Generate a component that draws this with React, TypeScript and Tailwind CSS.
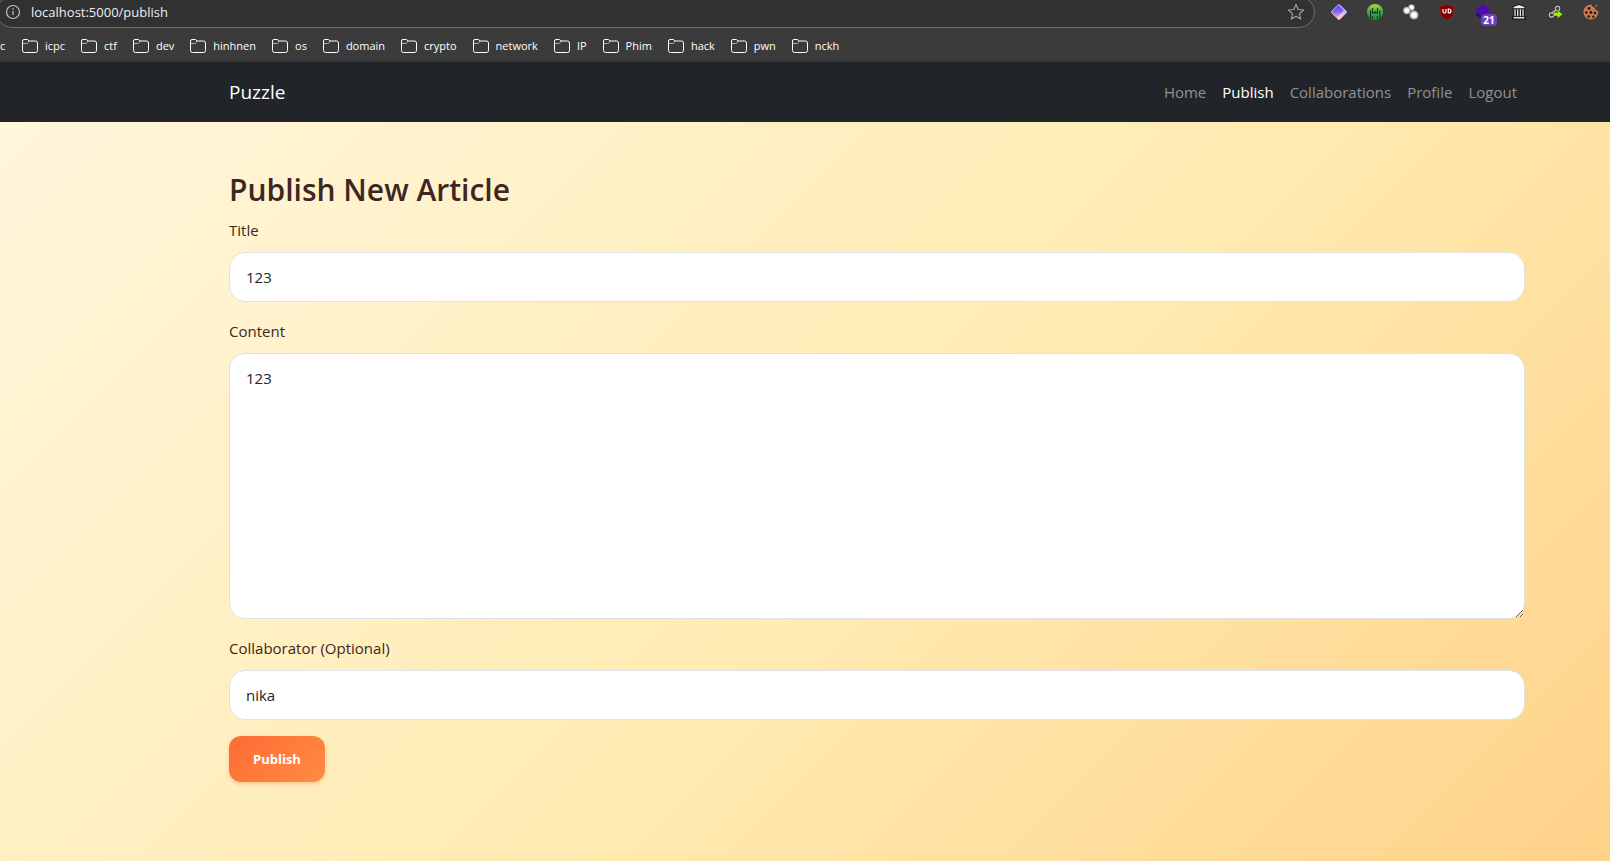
import type { ReactNode } from 'react';

const bookmarks = ['icpc', 'ctf', 'dev', 'hinhnen', 'os', 'domain', 'crypto', 'network', 'IP', 'Phim', 'hack', 'pwn', 'nckh'];

const navItems = [
  { label: 'Home', active: false },
  { label: 'Publish', active: true },
  { label: 'Collaborations', active: false },
  { label: 'Profile', active: false },
  { label: 'Logout', active: false },
];

function Folder() {
  return (
    <svg width="16" height="14" viewBox="0 0 16 14" fill="none" strokeWidth="1">
      <path d="M.5 4.500h4c1.200 0 2-.800 2.300-2.500" stroke="#b5b5b5" />
      <path d="M2 .5h3c.6 0 1 .2 1.300.600l.7.900h6.500a2 2 0 0 1 2 2v7.500a2 2 0 0 1-2 2H2.500a2 2 0 0 1-2-2V2A1.500 1.500 0 0 1 2 .5z" stroke="#fff" />
    </svg>
  );
}

function Info() {
  return (
    <svg width="16" height="16" viewBox="0 0 16 16" fill="none" stroke="#c4c4c4">
      <circle cx="8" cy="8" r="6.500" strokeWidth="1.200" />
      <path d="M8 7v4" strokeWidth="1.200" />
      <circle cx="8" cy="5" r=".8" fill="#c4c4c4" stroke="none" />
    </svg>
  );
}

function Star() {
  return (
    <svg width="18" height="18" viewBox="0 0 18 18" fill="none" stroke="#a6a6a6" strokeWidth="1.100" strokeLinejoin="round">
      <path d="M9 1.500l2.200 5 5.400.500-4.100 3.600 1.200 5.400L9 13.200 4.300 16l1.200-5.400L1.400 7l5.400-.500z" />
    </svg>
  );
}

function Ext({ label, children }: { label: string; children: ReactNode }) {
  return (
    <button type="button" aria-label={label} className="relative flex h-6 w-5 items-center justify-center">
      {children}
    </button>
  );
}

function Extensions() {
  return (
    <div className="flex shrink-0 items-center gap-4">
      <Ext label="Diamond">
        <svg width="16" height="16" viewBox="0 0 16 16">
          <defs>
            <linearGradient id="dia" x1="0" y1="0" x2="0" y2="1">
              <stop offset="0" stopColor="#a58bff" />
              <stop offset=".5" stopColor="#c9b8f5" />
              <stop offset="1" stopColor="#ffd0b8" />
            </linearGradient>
            <linearGradient id="diaInner" x1="0" y1="0" x2="0" y2="1">
              <stop offset="0" stopColor="#5f4bff" />
              <stop offset=".5" stopColor="#7f5cf5" />
              <stop offset="1" stopColor="#f0a8b4" />
            </linearGradient>
          </defs>
          <path d="M7 .500q1-.800 2 0l6.500 6.500q.800 1 0 2L9 15.500q-1 .800-2 0L.5 9q-.800-1 0-2z" fill="url(#dia)" />
          <path d="M7.500 1.200L12.800 6.500 6 13.200 1.200 8.500q-.500-.500 0-1z" fill="url(#diaInner)" />
        </svg>
      </Ext>
      <Ext label="Green bars">
        <svg width="16" height="16" viewBox="0 0 16 16">
          <defs>
            <linearGradient id="grn" x1="0" y1="0" x2="0" y2="1">
              <stop offset="0" stopColor="#b5d334" />
              <stop offset=".5" stopColor="#3fae49" />
              <stop offset="1" stopColor="#12883c" />
            </linearGradient>
          </defs>
          <circle cx="8" cy="8" r="8" fill="url(#grn)" />
          <path d="M3.500 6v8M5.500 4v6M5.500 12v3M8 7v3M10.500 4v6M10.500 12v3M12.800 6v8M5.500 8.500h5" stroke="#1c3b24" strokeWidth="1.100" fill="none" />
        </svg>
      </Ext>
      <Ext label="Dots">
        <svg width="18" height="18" viewBox="0 0 18 18">
          <defs>
            <radialGradient id="dot">
              <stop offset=".45" stopColor="#fff" />
              <stop offset="1" stopColor="#8d8d8d" />
            </radialGradient>
          </defs>
          <circle cx="9.500" cy="4.500" r="3.300" fill="url(#dot)" />
          <circle cx="4.800" cy="7.500" r="3.800" fill="url(#dot)" />
          <circle cx="12" cy="12" r="4.600" fill="url(#dot)" />
        </svg>
      </Ext>
      <Ext label="Shield">
        <svg width="16" height="16" viewBox="0 0 16 16">
          <path d="M8 0c2 1.400 4 1.800 6.800 1.800V8c0 4-3 6.500-6.800 8-3.800-1.500-6.800-4-6.800-8V1.800C4 1.800 6 1.400 8 0z" fill="#800000" stroke="#a33" strokeWidth=".5" />
          <path d="M4 5v2.500a1.500 1.500 0 0 0 3 0V5M9.300 5v4h.7a2 2 0 0 0 0-4z" fill="none" stroke="#fff" strokeWidth="1.200" />
        </svg>
      </Ext>
      <Ext label="Layers">
        <svg width="16" height="16" viewBox="0 0 16 16">
          <path d="M8 0l8 6-8 6-8-6z" fill="#4a0bb0" />
          <path d="M1 8l7 5v2.500L1 11z" fill="#23078a" />
        </svg>
        <span className="absolute top-[14px] left-2 flex h-3 w-4 items-center justify-center rounded bg-[#6b3fc0] text-[10px] font-bold text-white">21</span>
      </Ext>
      <Ext label="Archive">
        <svg width="14" height="16" viewBox="0 0 14 16">
          <path d="M7 0l6.500 2.500V5h-.8v7l1.300 1v2.500H0V13l1.300-1V5H.5V2.500z" fill="#111" />
          <path d="M7 1l5.500 2v1.200h-11V3z" fill="#eee" />
          <path d="M3 5.200v7M5.700 5.200v7M8.400 5.200v7M11 5.200v7" stroke="#e4e4e4" strokeWidth="1.300" />
          <path d="M1.500 13.800h11" stroke="#eee" strokeWidth="1.400" />
        </svg>
      </Ext>
      <Ext label="Redirect">
        <svg width="16" height="16" viewBox="0 0 16 16" fill="none">
          <g stroke="#1e1e1e" strokeWidth="3">
            <circle cx="10.500" cy="4.500" r="2.200" />
            <circle cx="4.500" cy="11" r="2.200" />
          </g>
          <g stroke="#b4bab5" strokeWidth="1.500">
            <circle cx="10.500" cy="4.500" r="2.200" />
            <circle cx="4.500" cy="11" r="2.200" />
            <path d="M9 6L6 9.500M5.500 7.500h3" />
          </g>
          <path d="M6.500 8.500h4V6l5 4.300-5 4.200V12h-4z" fill="#a2ee14" stroke="#3d6b0c" strokeWidth=".5" />
        </svg>
      </Ext>
      <Ext label="Cookies">
        <svg width="16" height="16" viewBox="0 0 16 16">
          <path d="M8.500.5a3 3 0 0 0 3.500 3 3 3 0 0 0 3.300 3.500A7.500 7.500 0 1 1 8.500.5z" fill="#c67a52" />
          <circle cx="13.500" cy="1.800" r="1" fill="#c67a52" />
          <g fill="#1f1512">
            <circle cx="6" cy="4.500" r="1.400" />
            <circle cx="3.300" cy="8.500" r="1.300" />
            <circle cx="8" cy="8.500" r="1.400" />
            <circle cx="12" cy="9" r="1.300" />
            <circle cx="5.800" cy="12.500" r="1.300" />
            <circle cx="10.300" cy="12.800" r="1.200" />
          </g>
        </svg>
      </Ext>
    </div>
  );
}

const field =
  'block w-full rounded-2xl border border-[#dee2e6] bg-white px-4 py-3 text-[15px] leading-6 text-[#212529] outline-none';
const fieldLabel = 'mb-[10px] block';

export default function App() {
  return (
    <div className="flex min-h-screen flex-col font-['Open_Sans','Noto_Sans',sans-serif] text-[15px] leading-6 text-[#3e2723]">
      <header className="overflow-hidden border-b border-[#333] bg-[#3b3b3b] text-white">
        <div className="-mt-1 -ml-1 flex h-8 items-center gap-[14px] pr-[9px]">
          <div className="flex h-8 flex-1 items-center gap-[10px] rounded-full border border-[#6e6e6e] bg-[#313131] pr-[9px] pl-2">
            <Info />
            <input
              aria-label="Address"
              defaultValue="localhost:5000/publish"
              className="min-w-0 flex-1 bg-transparent text-[13px] leading-5 text-[#eee] outline-none"
            />
            <Star />
          </div>
          <Extensions />
        </div>
        <nav aria-label="Bookmarks" className="flex h-[33px] items-center gap-4 pt-[3px] text-[11px] leading-4">
          <a href="#c" className="w-[6px]">c</a>
          {bookmarks.map((name) => (
            <a key={name} href={'#' + name} className="flex items-center gap-[7px]">
              <Folder />
              {name}
            </a>
          ))}
        </nav>
      </header>

      <div className="flex flex-1 flex-col bg-[linear-gradient(135deg,#fff7de_0%,#ffecb3_50%,#ffcc80_100%)] bg-[length:109%_110%]">
        <nav aria-label="Main" className="flex h-[60px] items-center justify-between bg-[#212529] pr-[85px] pl-[229px]">
          <a href="#top" className="text-[19px] leading-8 text-white">Puzzle</a>
          <ul className="flex gap-4 pr-2">
            {navItems.map((item) => (
              <li key={item.label}>
                <a href={'#' + item.label} className={item.active ? 'text-white' : 'text-[#909294]'}>
                  {item.label}
                </a>
              </li>
            ))}
          </ul>
        </nav>

        <main className="pt-12 pr-[85px] pb-12 pl-[229px]">
          <h1 className="mb-2 text-[30px] leading-10 font-semibold">Publish New Article</h1>
          <form onSubmit={(e) => e.preventDefault()}>
            <div className="mb-[17px]">
              <label htmlFor="title" className={fieldLabel}>Title</label>
              <input id="title" defaultValue="123" className={field} />
            </div>
            <div className="mb-[17px]">
              <label htmlFor="content" className={fieldLabel}>Content</label>
              <textarea id="content" rows={10} defaultValue="123" className={field} />
            </div>
            <div className="mb-4">
              <label htmlFor="collaborator" className={fieldLabel}>Collaborator (Optional)</label>
              <input id="collaborator" defaultValue="nika" className={field} />
            </div>
            <button
              type="submit"
              className="rounded-xl bg-[linear-gradient(135deg,#ff6b35,#ff8c42)] px-6 py-3 text-[13px] leading-[22px] font-bold text-white shadow-[0_2px_4px_rgba(255,107,53,0.3)]"
            >
              Publish
            </button>
          </form>
        </main>
      </div>
    </div>
  );
}
